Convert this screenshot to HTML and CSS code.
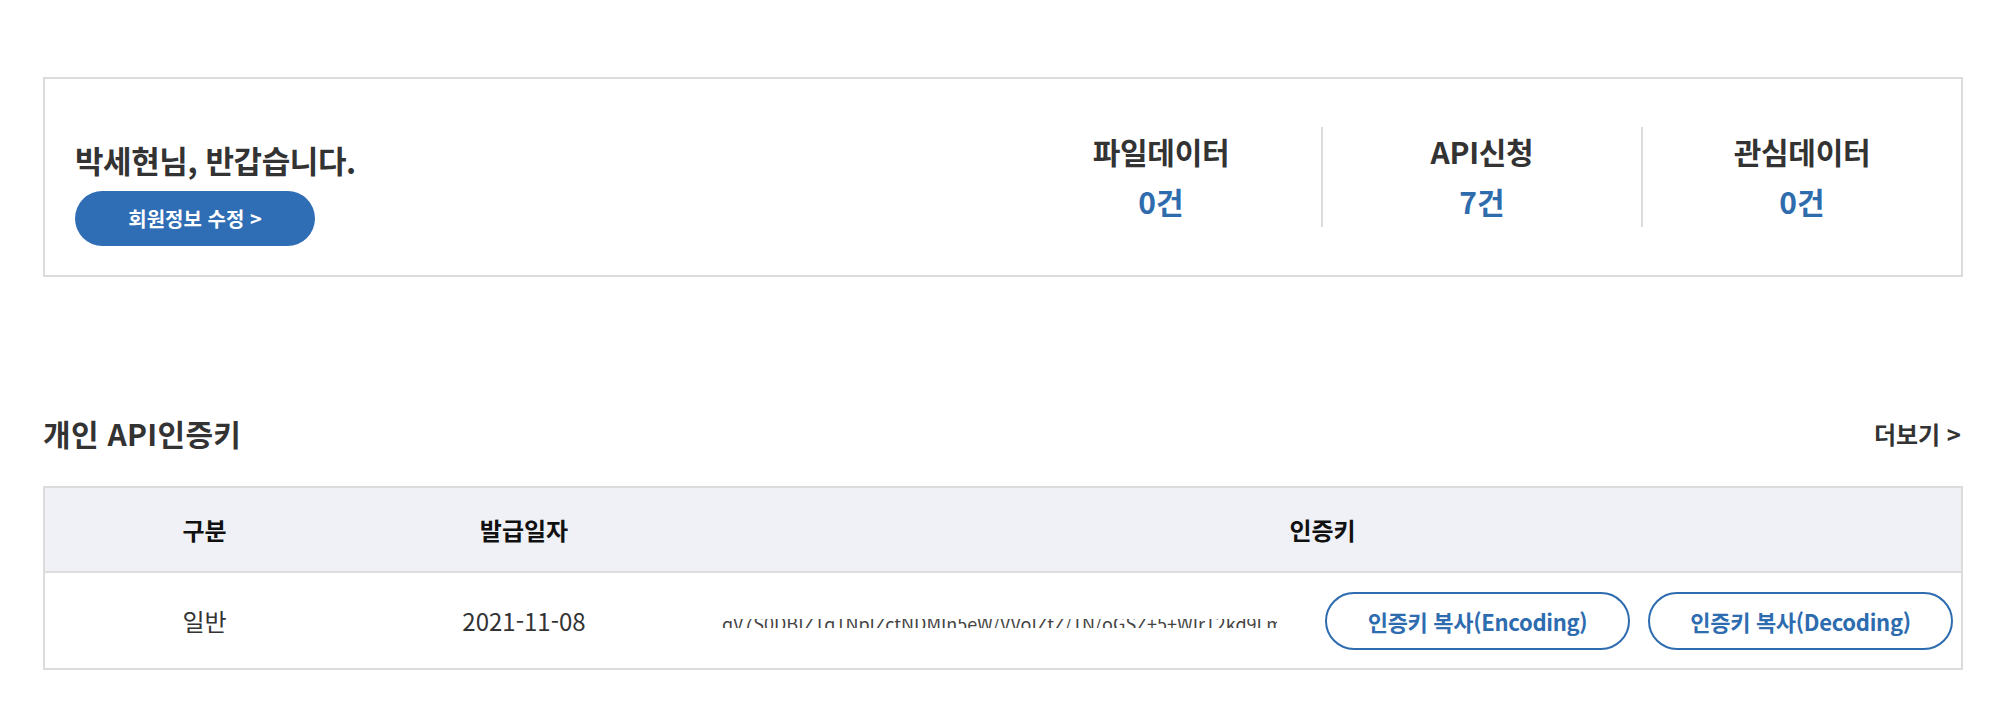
FILE: index.html
```html
<!DOCTYPE html>
<html lang="ko">
<head>
<meta charset="utf-8">
<title>마이페이지</title>
<link rel="stylesheet" href="styles.css">
</head>
<body>
<main class="page">
  <section class="summary">
    <div class="greet">
      <h2 class="greet-title">박세현님, 반갑습니다.</h2>
      <a class="btn-profile" href="#">회원정보 수정 &gt;</a>
    </div>
    <ul class="stats">
      <li class="stat"><strong class="stat-label">파일데이터</strong><span class="stat-value">0건</span></li>
      <li class="stat"><strong class="stat-label">API신청</strong><span class="stat-value">7건</span></li>
      <li class="stat"><strong class="stat-label">관심데이터</strong><span class="stat-value">0건</span></li>
    </ul>
  </section>

  <section class="keys">
    <div class="keys-head">
      <h3 class="keys-title">개인 API인증키</h3>
      <a class="more" href="#">더보기 &gt;</a>
    </div>
    <table class="key-table">
      <colgroup>
        <col class="col-type">
        <col class="col-date">
        <col>
      </colgroup>
      <thead>
        <tr><th>구분</th><th>발급일자</th><th>인증키</th></tr>
      </thead>
      <tbody>
        <tr>
          <td>일반</td>
          <td>2021-11-08</td>
          <td class="key-cell">
            <div class="key-row">
              <span class="key-text">qV7S0DBIZ1q1NpIZctNDMIn5eW/VVoIZtZ/1N/oGSZ+5+WIrT2kd9Lm==</span>
              <div class="key-btns">
                <button class="btn-copy" type="button">인증키 복사(Encoding)</button>
                <button class="btn-copy" type="button">인증키 복사(Decoding)</button>
              </div>
            </div>
          </td>
        </tr>
      </tbody>
    </table>
  </section>
</main>
</body>
</html>
```

FILE: styles.css
```css
* { box-sizing: border-box; }

body {
  margin: 0;
  background: #fff;
  font-family: "Noto Sans CJK KR", "Noto Sans", sans-serif;
  color: #333;
}

.page {
  width: 1994px;
  padding: 77px 31px 0 43px;
}

/* summary box */
.summary {
  display: flex;
  align-items: center;
  height: 200px;
  border: 2px solid #dcdcdc;
  padding-left: 30px;
}

.greet {
  flex: 1;
  padding-top: 32px;
}

.greet-title {
  margin: 0 0 11px;
  font-size: 31px;
  line-height: 40px;
  font-weight: 700;
  color: #333;
  letter-spacing: -0.4px;
}

.btn-profile {
  display: inline-flex;
  align-items: center;
  justify-content: center;
  width: 240px;
  height: 55px;
  border-radius: 28px;
  background: #2f6db5;
  color: #fff;
  font-size: 20px;
  font-weight: 700;
  text-decoration: none;
}

.stats {
  display: flex;
  margin: 0;
  padding: 0;
  list-style: none;
}

.stat {
  width: 320px;
  height: 100px;
  display: flex;
  flex-direction: column;
  align-items: center;
  justify-content: center;
  gap: 10px;
  padding-bottom: 2px;
}

.stat + .stat {
  border-left: 2px solid #dcdcdc;
}

.stat-label {
  font-size: 30px;
  line-height: 40px;
  font-weight: 700;
  color: #333;
  letter-spacing: -0.3px;
}

.stat-value {
  font-size: 30px;
  line-height: 40px;
  font-weight: 700;
  color: #2e6cae;
}

/* keys section */
.keys {
  margin-top: 136px;
}

.keys-head {
  display: flex;
  align-items: center;
  justify-content: space-between;
  height: 40px;
  padding-right: 2px;
}

.keys-title {
  margin: 0;
  font-size: 30px;
  line-height: 40px;
  font-weight: 700;
  color: #333;
  letter-spacing: 0.3px;
}

.more {
  font-size: 24px;
  font-weight: 700;
  color: #333;
  text-decoration: none;
}

.key-table {
  width: 100%;
  margin-top: 33px;
  border-collapse: collapse;
  border: 2px solid #dcdcdc;
  table-layout: fixed;
}

.col-type, .col-date { width: 320px; }

.key-table th {
  height: 85px;
  background: #eff1f6;
  border-bottom: 2px solid #dcdcdc;
  font-size: 24px;
  font-weight: 700;
  color: #111;
  text-align: center;
  padding: 0;
}

.key-table td {
  height: 97px;
  font-size: 24px;
  color: #333;
  text-align: center;
  padding: 0;
}

.key-table td.key-cell {
  padding: 0 8px 0 38px;
  text-align: left;
}

.key-row {
  display: flex;
  align-items: center;
}

.key-text {
  display: block;
  width: 555px;
  height: 9px;
  line-height: 9px;
  font-size: 18px;
  white-space: nowrap;
  overflow: hidden;
  color: #444;
  margin-top: 6px;
}

.key-btns {
  display: flex;
  gap: 18px;
  margin-left: auto;
}

.btn-copy {
  width: 305px;
  height: 58px;
  border: 2px solid #2e6cb0;
  border-radius: 29px;
  background: #fff;
  color: #2e6cb0;
  font-family: "Noto Sans CJK KR", "Noto Sans", sans-serif;
  font-size: 22px;
  font-weight: 700;
  padding: 0;
  letter-spacing: -0.3px;
}
```
